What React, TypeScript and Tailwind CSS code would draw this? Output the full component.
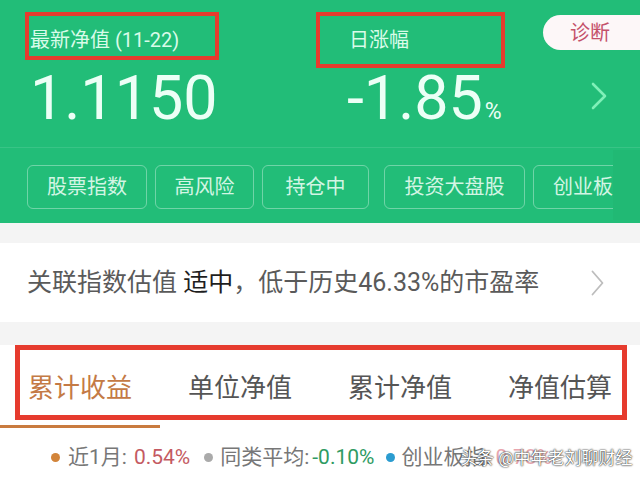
import React from 'react'

const tags = [
    { label: '股票指数', w: 'w-[120px]' },
    { label: '高风险', w: 'w-[99px]' },
    { label: '持仓中', w: 'w-[107px]' },
    { label: '投资大盘股', w: 'w-[141px]' },
    { label: '创业板', w: 'w-[100px]' },
]

const tabs = ['累计收益', '单位净值', '累计净值', '净值估算']

const App = () => {
    return (
        <div
            className="relative w-[640px] h-[483px] overflow-hidden bg-white"
            style={{ fontFamily: "Roboto, 'Noto Sans CJK SC', sans-serif" }}
        >
            {/* header */}
            <div className="relative h-[223px] bg-[#22bd78]">
                <div className="flex pl-[30px] pt-[28px]">
                    <div className="w-[317px]">
                        <div className="text-[20px] leading-[24px] text-[#d9fbe9]">最新净值 (11-22)</div>
                        <div className="mt-[16px] text-[61px] leading-[60px] text-[#ecfff6]">1.1150</div>
                    </div>
                    <div>
                        <div className="text-[20px] leading-[24px] text-[#d9fbe9] pl-[2px]">日涨幅</div>
                        <div className="mt-[16px] flex items-baseline text-[#ecfff6]">
                            <span className="text-[61px] leading-[60px]">-1.85</span>
                            <span className="text-[23px] ml-[2px]">%</span>
                        </div>
                    </div>
                    <div className="ml-auto mr-[32px] mt-[54px]">
                        <svg width="18" height="28" viewBox="0 0 18 28" fill="none">
                            <path d="M3 2 L15 14 L3 26" stroke="#7ff0b8" strokeWidth="2.6" strokeLinecap="round" strokeLinejoin="round" />
                        </svg>
                    </div>
                </div>
                <div className="mt-[17px] h-px bg-white/10" />
                <div className="flex gap-2 pl-[27px] mt-[17px]">
                    {tags.map((t, i) => (
                        <div
                            key={t.label}
                            className={`${t.w} ${i === 2 ? 'mr-[7px]' : ''} shrink-0 h-[44px] flex items-center justify-center rounded-[6px] border border-white/35 text-[20px] text-[#d3f5e4]`}
                        >
                            {t.label}
                        </div>
                    ))}
                </div>
                <div className="absolute right-0 top-[150px] w-[27px] h-[70px] bg-[#21b974]" />
                {/* diagnose pill */}
                <div className="absolute right-0 top-[15px] w-[97px] h-[35px] rounded-l-full bg-[#fdf7f8] flex items-center pl-[27px] text-[20px] text-[#c4506a]">
                    诊断
                </div>
            </div>

            <div className="h-[20px] bg-[#f4f4f4]" />

            <div className="h-[79px] flex items-center justify-between pl-[27px] pr-[36px] text-[25px] text-[#5a5a5a]">
                <div className="whitespace-nowrap">
                    关联指数估值 <span className="text-[#1e1e1e]">适中</span>，低于历史46.33%的市盈率
                </div>
                <svg width="13" height="26" viewBox="0 0 13 26" fill="none">
                    <path d="M1.5 1.5 L11.5 13 L1.5 24.5" stroke="#bdbdbd" strokeWidth="1.8" strokeLinecap="round" strokeLinejoin="round" />
                </svg>
            </div>

            <div className="h-[23px] bg-[#f4f4f4]" />

            {/* tabs */}
            <div className="flex justify-between pl-[28px] pr-[28px] pt-[25px] text-[26px] leading-[36px]">
                {tabs.map((t, i) => (
                    <div key={t} className={i === 0 ? 'text-[#c47a45]' : 'text-[#555]'}>{t}</div>
                ))}
            </div>
            <div className="mt-[19px] w-[160px] h-[3px] bg-[#c97b3f]" />

            {/* legend */}
            <div className="mt-[16px] flex items-center pl-[51px] text-[21px] leading-[26px] text-[#777] whitespace-nowrap">
                <span className="w-[9px] h-[9px] rounded-full bg-[#d2843a] mr-[8px]" />
                <span>近1月:</span>
                <span className="text-[#c45a62] ml-[7px]">0.54%</span>
                <span className="w-[9px] h-[9px] rounded-full bg-[#aaaaaa] ml-[14px] mr-[7px]" />
                <span>同类平均:</span>
                <span className="text-[#2e9b62] ml-[3px]">-0.10%</span>
                <span className="w-[9px] h-[9px] rounded-full bg-[#2b9cd0] ml-[12px] mr-[6px]" />
                <span>创业板指:</span>
                <span className="text-[#e8a6ae] ml-[5px]">0.78%</span>
            </div>

            {/* watermark */}
            <div className="absolute left-[460px] top-[447px] whitespace-nowrap text-[17px] leading-[22px] text-white [text-shadow:0_0_2px_#222,0_0_1px_#222]">
                头条 @中年老刘聊财经
            </div>

            {/* red annotation boxes */}
            <div className="absolute left-[25px] top-[12px] w-[194px] h-[48px] border-[4px] border-[#e63b2e]" />
            <div className="absolute left-[316px] top-[12px] w-[189px] h-[56px] border-[4px] border-[#e63b2e]" />
            <div className="absolute left-[15px] top-[345px] w-[612px] h-[75px] border-[5px] border-[#e63b2e]" />
        </div>
    )
}

export default App
